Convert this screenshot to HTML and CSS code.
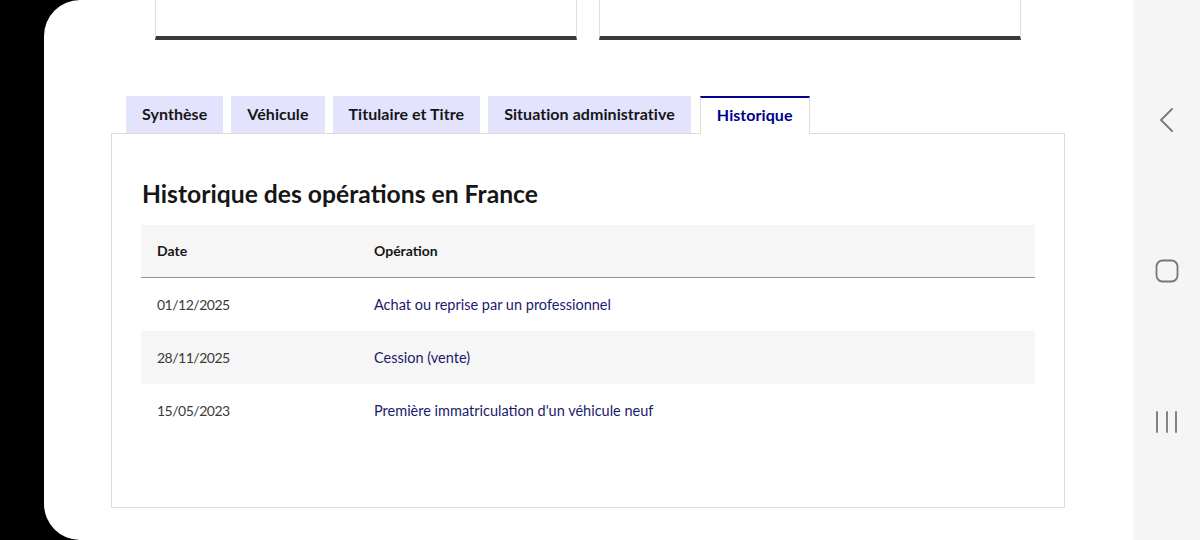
FILE: index.html
```html
<!DOCTYPE html>
<html lang="fr">
<head>
<meta charset="utf-8">
<link rel="stylesheet" href="styles.css">
</head>
<body>
<div class="device">
  <div class="bezel"></div>
  <main class="screen">
    <div class="cards">
      <div class="card"></div>
      <div class="card"></div>
    </div>
    <div class="tabs">
      <ul class="tablist">
        <li class="tab">Synthèse</li>
        <li class="tab">Véhicule</li>
        <li class="tab">Titulaire et Titre</li>
        <li class="tab">Situation administrative</li>
        <li class="tab active">Historique</li>
      </ul>
      <section class="panel">
        <h2 class="title">Historique des opérations en France</h2>
        <table class="table">
          <thead>
            <tr><th class="col-date">Date</th><th>Opération</th></tr>
          </thead>
          <tbody>
            <tr><td class="col-date">01/12/2025</td><td class="op">Achat ou reprise par un professionnel</td></tr>
            <tr class="alt"><td class="col-date">28/11/2025</td><td class="op">Cession (vente)</td></tr>
            <tr><td class="col-date">15/05/2023</td><td class="op">Première immatriculation d'un véhicule neuf</td></tr>
          </tbody>
        </table>
      </section>
    </div>
  </main>
  <nav class="navbar">
    <svg class="nav-icon" width="24" height="24" viewBox="0 0 24 24"><path d="M17 1 L6 12 L17 23" fill="none" stroke="#777" stroke-width="1.8" stroke-linecap="round" stroke-linejoin="round"/></svg>
    <svg class="nav-icon" width="24" height="24" viewBox="0 0 24 24"><rect x="1.5" y="1.5" width="21" height="21" rx="6" fill="none" stroke="#777" stroke-width="1.8"/></svg>
    <svg class="nav-icon" width="24" height="24" viewBox="0 0 24 24"><path d="M2 2 V22 M12 2 V22 M21 2 V22" fill="none" stroke="#777" stroke-width="1.8" stroke-linecap="round"/></svg>
  </nav>
</div>
</body>
</html>
```

FILE: styles.css
```css
html, body {
  margin: 0;
  padding: 0;
  width: 1200px;
  height: 540px;
  overflow: hidden;
  background: #000;
  font-family: "Lato", "Noto Sans", sans-serif;
}
.device {
  display: flex;
  width: 1200px;
  height: 540px;
}
.bezel {
  width: 44px;
  flex: none;
  background: #000;
}
.screen {
  width: 1089px;
  flex: none;
  background: #fff;
  border-radius: 36px 0 0 36px;
  overflow: hidden;
}
.navbar {
  width: 67px;
  flex: none;
  background: #f5f5f5;
  display: flex;
  flex-direction: column;
  align-items: center;
  padding-top: 108px;
  gap: 127px;
  box-sizing: border-box;
}
.nav-icon { display: block; }

.cards {
  display: flex;
  gap: 22px;
  margin-left: 111px;
}
.card {
  width: 420px;
  height: 36px;
  border: 1px solid #e0e0e0;
  border-top: none;
  border-bottom: 4px solid #3a3a3a;
}
.tabs {
  margin: 56px 0 0 67px;
  width: 954px;
}
.tablist {
  list-style: none;
  margin: 0 0 0 15px;
  padding: 0;
  display: flex;
  gap: 8px;
}
.tab {
  background: #e3e3fd;
  color: #161616;
  font-weight: 700;
  font-size: 16px;
  letter-spacing: 0.06px;
  line-height: 24px;
  padding: 6px 16px 7px;
}
.tab.active {
  background: #fff;
  color: #000091;
  border-top: 2px solid #000091;
  border-left: 1px solid #ddd;
  border-right: 1px solid #ddd;
  padding: 5px 16px 7px;
  margin-left: 1px;
  margin-bottom: -1px;
  position: relative;
  z-index: 1;
}
.panel {
  border: 1px solid #ddd;
  height: 375px;
  box-sizing: border-box;
  padding: 44px 29px 0;
}
.title {
  margin: 0 0 15px 1px;
  font-size: 24.7px;
  line-height: 32px;
  font-weight: 700;
  color: #161616;
}
.table {
  width: 894px;
  border-collapse: collapse;
  font-size: 14.5px;
}
.table th {
  background: #f6f6f6;
  text-align: left;
  font-weight: 700;
  font-size: 14px;
  color: #161616;
  height: 50px;
  padding: 0 16px 2px;
  border-bottom: 1px solid #929292;
}
.table td {
  height: 53px;
  padding: 0 16px;
  color: #3a3a3a;
}
.table td.col-date { letter-spacing: -0.5px; font-size: 14px; }
.table .col-date { width: 185px; }
.table td.op { color: #1a1a6e; }
.table tr.alt td { background: #f6f6f6; }
```
